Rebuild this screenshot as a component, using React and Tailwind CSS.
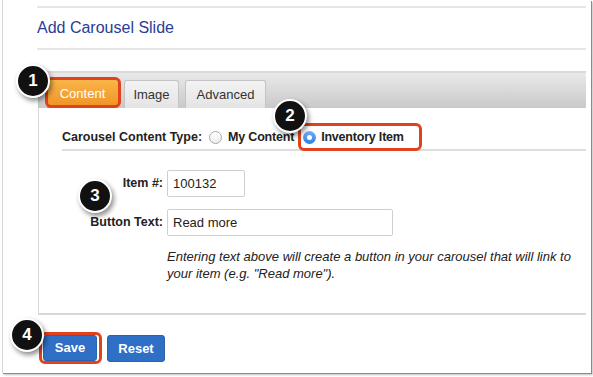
import React from 'react'

const font = { fontFamily: '"Liberation Sans", Arial, sans-serif' }

function Badge({ n, className }) {
  return (
    <div
      className={`absolute w-[34px] h-[34px] rounded-full bg-[#111] border-2 border-white shadow-[2px_3px_5px_rgba(0,0,0,0.45)] flex items-center justify-center text-white font-bold text-[17px] ${className}`}
    >
      {n}
    </div>
  )
}

function Tab({ label, active, w }) {
  if (active) {
    return (
      <div className="h-[28px] w-[71px] flex items-center justify-center rounded-t-[3px] bg-gradient-to-b from-[#f9b448] to-[#ee9321] text-white text-[13px]">
        {label}
      </div>
    )
  }
  return (
    <div className={`h-[28px] ${w} flex items-center justify-center rounded-t-[3px] border border-b-0 border-[#c4c4c4] bg-gradient-to-b from-[#f3f3f3] to-[#e4e4e4] text-[#333] text-[13px]`}>
      {label}
    </div>
  )
}

export default function App() {
  return (
    <div className="relative w-[593px] h-[377px] bg-white overflow-hidden" style={font}>
      <div className="ml-[2px] w-[589px] h-[373px] border-l border-[#d6d6d6] bg-white shadow-[1px_1px_0_#8a8a8a,2px_2px_2px_rgba(0,0,0,0.25)] pl-[34px] pr-[5px] pt-[6px]">
        <div className="h-[2px] bg-[#e6e6e6]" />
        <div className="py-[10px]">
          <h1 className="text-[16px] leading-[20px] text-[#2b3b98]">Add Carousel Slide</h1>
        </div>
        <div className="h-[2px] bg-[#e6e6e6]" />

        <div className="mt-[21px] ml-[1px] border-t-2 border-[#dadada]">
          <div className="h-[35px] flex items-end gap-[6px] pl-[8px] bg-gradient-to-b from-[#e9e9e9] to-[#c9c9c9] border-l border-[#c4c4c4]">
            <Tab label="Content" active />
            <Tab label="Image" w="w-[55px]" />
            <Tab label="Advanced" w="w-[81px]" />
          </div>
          <div className="h-[207px] border-l border-b-2 border-[#d8d8d8] pl-[23px] pt-[17px]">
            <div className="h-[26px] flex items-center border-b-2 border-[#dedede] text-[12.5px] text-[#222] pt-[1px]">
              <span className="font-bold">Carousel Content Type:</span>
              <span className="ml-[7px] w-[13px] h-[13px] rounded-full border border-[#a9a9a9] bg-gradient-to-b from-white to-[#eee]" />
              <span className="ml-[6px] font-bold tracking-[-0.2px]">My Content</span>
              <span className="ml-[9px] w-[13px] h-[13px] rounded-full bg-gradient-to-b from-[#6fb0f5] to-[#2f7ee0] flex items-center justify-center">
                <span className="w-[5px] h-[5px] rounded-full bg-white" />
              </span>
              <span className="ml-[5px] font-bold tracking-[-0.2px]">Inventory Item</span>
            </div>

            <div className="mt-[19px] flex flex-col gap-[12px] text-[13px] text-[#222]">
              <div className="flex items-center">
                <label className="w-[105px] pr-[4px] text-right font-bold text-[12.5px]">Item #:</label>
                <div className="w-[78px] h-[27px] border border-[#cfcfcf] rounded-[2px] pl-[5px] flex items-center">100132</div>
              </div>
              <div className="flex items-center">
                <label className="w-[105px] pr-[4px] text-right font-bold text-[12.5px]">Button Text:</label>
                <div className="w-[226px] h-[27px] border border-[#cfcfcf] rounded-[2px] pl-[5px] flex items-center">Read more</div>
              </div>
            </div>
            <p className="mt-[12px] ml-[105px] italic text-[13px] leading-[17px] text-[#222] w-[414px]">
              Entering text above will create a button in your carousel that will link to your item (e.g. "Read more").
            </p>
          </div>
        </div>

        <div className="mt-[20px] ml-[6px] flex gap-[10px]">
          <button className="w-[54px] h-[26px] rounded-[3px] bg-[#2f6fc6] border border-[#2a62ae] text-white font-bold text-[13px]">Save</button>
          <button className="w-[58px] h-[27px] rounded-[3px] bg-[#2f6fc6] border border-[#2a62ae] text-white font-bold text-[13px]">Reset</button>
        </div>
      </div>

      <div className="absolute left-[45px] top-[77px] w-[76px] h-[31px] rounded-[6px] border-[3px] border-[#e2421b]" />
      <div className="absolute left-[298px] top-[123px] w-[124px] h-[28px] rounded-[6px] border-[3px] border-[#e2421b]" />
      <div className="absolute left-[39px] top-[332px] w-[63px] h-[32px] rounded-[6px] border-[3px] border-[#e2421b]" />

      <Badge n="1" className="left-[16px] top-[64px]" />
      <Badge n="2" className="left-[273px] top-[99px]" />
      <Badge n="3" className="left-[78px] top-[179px]" />
      <Badge n="4" className="left-[10px] top-[318px]" />
    </div>
  )
}
